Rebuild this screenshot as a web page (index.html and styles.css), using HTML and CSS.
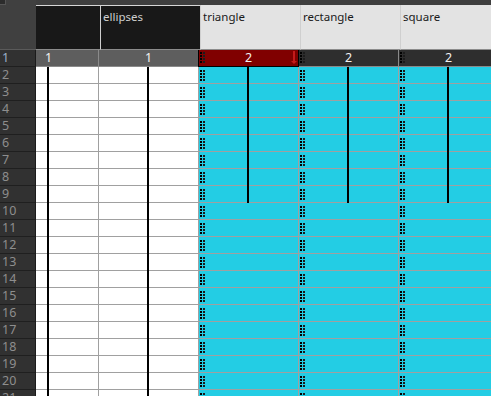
FILE: index.html
```html
<!DOCTYPE html>
<html>
<head>
<meta charset="utf-8">
<link rel="stylesheet" href="styles.css">
</head>
<body>
<div class="app">
  <div class="top">
    <div class="corner"><span class="knob"></span></div>
    <div class="heads">
      <div class="htrack">
        <div class="h dark"></div>
        <div class="h dark">ellipses</div>
        <div class="h light">triangle</div>
        <div class="h light">rectangle</div>
        <div class="h light">square</div>
      </div>
    </div>
  </div>
  <div class="main">
    <div class="rownums">
      <div class="rn cur">1</div>
      <div class="rn">2</div><div class="rn">3</div><div class="rn">4</div><div class="rn">5</div>
      <div class="rn">6</div><div class="rn">7</div><div class="rn">8</div><div class="rn">9</div>
      <div class="rn">10</div><div class="rn">11</div><div class="rn">12</div><div class="rn">13</div>
      <div class="rn">14</div><div class="rn">15</div><div class="rn">16</div><div class="rn">17</div>
      <div class="rn">18</div><div class="rn">19</div><div class="rn">20</div><div class="rn">21</div>
    </div>
    <div class="grid">
      <div class="track">
        <div class="col long">
          <div class="fr gray">1</div>
          <div class="c w"></div><div class="c w"></div><div class="c w"></div><div class="c w"></div>
          <div class="c w"></div><div class="c w"></div><div class="c w"></div><div class="c w"></div>
          <div class="c w"></div><div class="c w"></div><div class="c w"></div><div class="c w"></div>
          <div class="c w"></div><div class="c w"></div><div class="c w"></div><div class="c w"></div>
          <div class="c w"></div><div class="c w"></div><div class="c w"></div><div class="c w"></div>
        </div>
        <div class="col long">
          <div class="fr gray">1</div>
          <div class="c w"></div><div class="c w"></div><div class="c w"></div><div class="c w"></div>
          <div class="c w"></div><div class="c w"></div><div class="c w"></div><div class="c w"></div>
          <div class="c w"></div><div class="c w"></div><div class="c w"></div><div class="c w"></div>
          <div class="c w"></div><div class="c w"></div><div class="c w"></div><div class="c w"></div>
          <div class="c w"></div><div class="c w"></div><div class="c w"></div><div class="c w"></div>
        </div>
        <div class="col short">
          <div class="fr red dots">2
            <svg class="marker" width="7" height="14" viewBox="0 0 7 14"><rect x="2" y="0" width="2" height="11" fill="#c41a1a"/><polygon points="0,10 6,10 3,13" fill="#c41a1a"/></svg>
          </div>
          <div class="c cy dots"></div><div class="c cy dots"></div><div class="c cy dots"></div><div class="c cy dots"></div>
          <div class="c cy dots"></div><div class="c cy dots"></div><div class="c cy dots"></div><div class="c cy dots"></div>
          <div class="c cy dots"></div><div class="c cy dots"></div><div class="c cy dots"></div><div class="c cy dots"></div>
          <div class="c cy dots"></div><div class="c cy dots"></div><div class="c cy dots"></div><div class="c cy dots"></div>
          <div class="c cy dots"></div><div class="c cy dots"></div><div class="c cy dots"></div><div class="c cy dots"></div>
        </div>
        <div class="col short">
          <div class="fr dk dots">2</div>
          <div class="c cy dots"></div><div class="c cy dots"></div><div class="c cy dots"></div><div class="c cy dots"></div>
          <div class="c cy dots"></div><div class="c cy dots"></div><div class="c cy dots"></div><div class="c cy dots"></div>
          <div class="c cy dots"></div><div class="c cy dots"></div><div class="c cy dots"></div><div class="c cy dots"></div>
          <div class="c cy dots"></div><div class="c cy dots"></div><div class="c cy dots"></div><div class="c cy dots"></div>
          <div class="c cy dots"></div><div class="c cy dots"></div><div class="c cy dots"></div><div class="c cy dots"></div>
        </div>
        <div class="col short">
          <div class="fr dk dots">2</div>
          <div class="c cy dots"></div><div class="c cy dots"></div><div class="c cy dots"></div><div class="c cy dots"></div>
          <div class="c cy dots"></div><div class="c cy dots"></div><div class="c cy dots"></div><div class="c cy dots"></div>
          <div class="c cy dots"></div><div class="c cy dots"></div><div class="c cy dots"></div><div class="c cy dots"></div>
          <div class="c cy dots"></div><div class="c cy dots"></div><div class="c cy dots"></div><div class="c cy dots"></div>
          <div class="c cy dots"></div><div class="c cy dots"></div><div class="c cy dots"></div><div class="c cy dots"></div>
        </div>
      </div>
    </div>
  </div>
</div>
</body>
</html>
```

FILE: styles.css
```css
* { box-sizing: border-box; }
html, body { margin: 0; padding: 0; background: #404040; }
body {
  font-family: "Noto Sans", "Open Sans", sans-serif;
  font-size: 11.5px;
}
.app {
  width: 491px;
  height: 396px;
  overflow: hidden;
  background: #404040;
}
.top {
  display: flex;
  height: 50px;
  background: #3e3e3e;
}
.corner {
  width: 36px;
  flex: none;
  background: #404040;
  border-bottom: 1px solid #5a5a5a;
  position: relative;
}
.knob {
  position: absolute;
  left: 0;
  top: 0;
  width: 6px;
  height: 5px;
  background: #2c2c2c;
  border-right: 1px solid #555;
  border-bottom: 1px solid #555;
}
.heads {
  flex: 1;
  overflow: hidden;
  padding-top: 5px;
}
.htrack {
  display: flex;
  margin-left: -36px;
}
.h {
  width: 100px;
  flex: none;
  height: 45px;
  padding: 4px 0 0 2px;
  line-height: 15px;
  border-left: 1px solid #cfcfcf;
  border-bottom: 1px solid #8c8c8c;
}
.h.dark {
  background: #181818;
  color: #cfcfcf;
  border-top: 1px solid #d6d6d6;
  padding-top: 3px;
}
.h.dark:first-child { border-left-color: #181818; }
.h.light {
  background: #e3e3e3;
  color: #1a1a1a;
}
.main {
  display: flex;
}
.rownums {
  width: 36px;
  flex: none;
  border-right: 1px solid #1b1b1b;
}
.rn {
  height: 17px;
  line-height: 16px;
  padding-left: 2px;
  font-size: 12.5px;
  color: #8e8e8e;
  background: #313131;
  border-bottom: 1px solid #1f1f1f;
}
.rn.cur { color: #9cb2c8; }
.grid {
  flex: 1;
  overflow: hidden;
}
.track {
  display: flex;
  margin-left: -38px;
}
.col {
  width: 100px;
  flex: none;
  position: relative;
}
.col::after {
  content: "";
  position: absolute;
  left: 49px;
  top: 17px;
  width: 2px;
  background: #000;
}
.col.long::after { bottom: 0; }
.col.short::after { height: 136px; }
.fr {
  height: 17px;
  line-height: 16px;
  text-align: center;
  font-size: 12.5px;
  color: #f2f2f2;
  border-left: 1px solid #8a8a8a;
  border-bottom: 1px solid #8a8a8a;
  position: relative;
}
.fr.gray { background: #5e5e5e; }
.fr.dk { background: #2e2e2e; }
.fr.red {
  background: #800000;
  border-left-color: #000;
  border-bottom-color: #000;
  box-shadow: 1px 0 0 #000;
  z-index: 1;
}
.marker {
  position: absolute;
  left: 92px;
  top: 1px;
}
.c {
  height: 17px;
  border-left: 1px solid #a0a0a0;
  border-bottom: 1px solid #a0a0a0;
  position: relative;
}
.c.w { background: #ffffff; }
.c.cy { background: #23cde4; }
.dots::before {
  content: "";
  position: absolute;
  left: 1px;
  top: 3px;
  width: 5px;
  height: 11px;
  background: linear-gradient(to right, #000 0 2px, transparent 2px 3px, #1c1c1c 3px 5px);
  -webkit-mask-image: repeating-linear-gradient(to bottom, #000 0 2px, transparent 2px 3px);
  mask-image: repeating-linear-gradient(to bottom, #000 0 2px, transparent 2px 3px);
}
.fr.dots::before { top: 2px; }
```
